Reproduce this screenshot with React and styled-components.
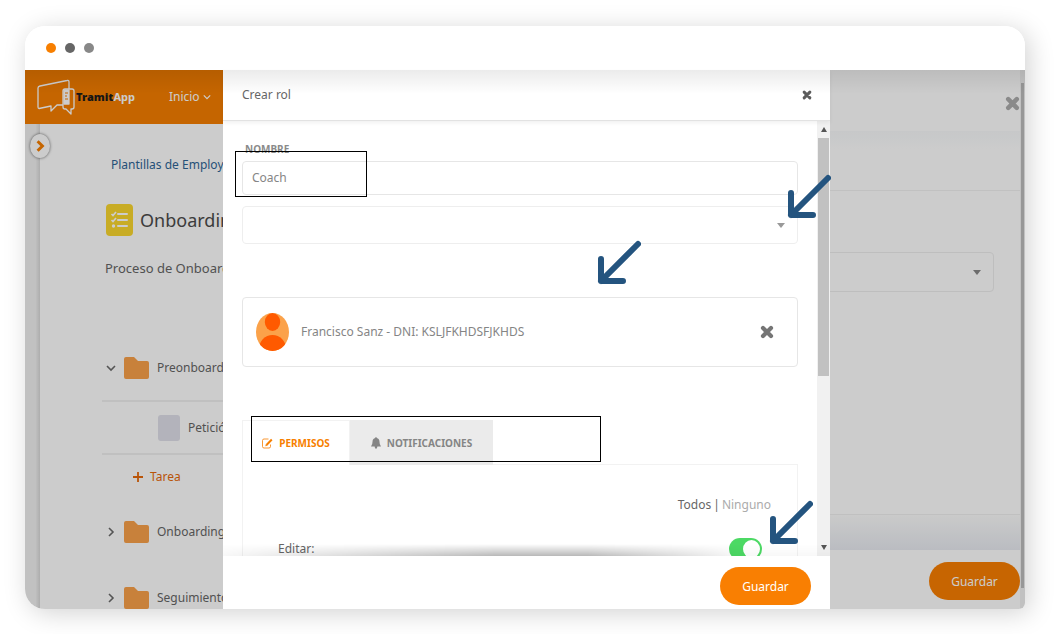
import React from 'react';
import styled, { createGlobalStyle, css } from 'styled-components';

const GlobalStyle = createGlobalStyle`
  *, *::before, *::after {
    box-sizing: border-box;
  }

  body {
    margin: 0;
    background: #fff;
    color: #666;
    font-family: "Noto Sans", "Open Sans", sans-serif;
    font-size: 12px;
    line-height: 16px;
  }

  button, input, select {
    font: inherit;
    color: inherit;
  }

  button {
    border: 0;
    padding: 0;
    background: none;
    cursor: pointer;
  }

  svg {
    display: block;
    flex: none;
  }
`;

const Backdrop = styled.div`
  height: 100vh;
  padding: 26px 36px 25px 25px;
  overflow: hidden;
`;

const Window = styled.div`
  display: flex;
  flex-direction: column;
  height: 100%;
  border-radius: 20px 20px 6px 20px;
  overflow: hidden;
  box-shadow: 4px 4px 26px rgba(0, 0, 0, .18);
`;

const TitleBar = styled.div`
  display: flex;
  align-items: center;
  gap: 9px;
  flex: none;
  height: 44px;
  padding: 0 21px;
  background: #fff;
`;

const Dot = styled.span`
  width: 10px;
  height: 10px;
  border-radius: 50%;
  background: ${({ color }) => color};
`;

const Screen = styled.div`
  position: relative;
  flex: 1;
  min-height: 0;
  background: #fff;

  &::after {
    content: '';
    position: absolute;
    top: 0;
    left: 0;
    right: 0;
    height: 24px;
    background: linear-gradient(rgba(0, 0, 0, .08), rgba(0, 0, 0, 0));
    pointer-events: none;
  }
`;

const Page = styled.div`
  display: flex;
  height: 100%;
`;

const AppPane = styled.div`
  display: flex;
  flex: 1;
  flex-direction: column;
  min-width: 0;
`;

const NavBar = styled.header`
  display: flex;
  align-items: center;
  gap: 34px;
  flex: none;
  height: 54px;
  padding: 0 12px;
  background: #f77f00;
  color: #fff;
`;

const Brand = styled.a`
  display: flex;
  align-items: center;
  color: #fff;
  font-size: 11px;
  font-weight: 700;
  text-decoration: none;

  b {
    color: #1c1c1c;
  }
`;

const NavLink = styled.a`
  display: flex;
  align-items: center;
  gap: 3px;
  color: #fff;
  text-decoration: none;
`;

const PaneBody = styled.div`
  display: flex;
  flex: 1;
  min-height: 0;
`;

const SideStrip = styled.div`
  position: relative;
  flex: none;
  width: 15px;
  background: linear-gradient(90deg, #f2f2f2 70%, #d8d8d8);
`;

const ExpandButton = styled.button`
  position: absolute;
  top: 10px;
  left: 5px;
  display: flex;
  align-items: center;
  justify-content: center;
  width: 20px;
  height: 24px;
  border-radius: 50%;
  background: #fff;
  box-shadow: 0 0 3px rgba(0, 0, 0, .6);
`;

const Main = styled.main`
  flex: 1;
  min-width: 0;
  padding: 33px 0 0 62px;
  white-space: nowrap;
  overflow: hidden;
`;

const Crumb = styled.a`
  display: block;
  margin-left: 9px;
  color: #2f6596;
  text-decoration: none;
`;

const TitleRow = styled.div`
  display: flex;
  align-items: center;
  gap: 7px;
  height: 32px;
  margin: 31px 0 0 4px;
`;

const PageTitle = styled.h1`
  margin: 0;
  color: #4c4c4c;
  font-size: 18px;
  font-weight: 400;
  line-height: 32px;
`;

const Summary = styled.p`
  margin: 22px 0 58px 3px;
  font-size: 13px;
  line-height: 20px;
`;

const TreeRow = styled.div`
  display: flex;
  align-items: center;
  gap: 8px;
  height: ${({ height }) => height}px;
  padding-left: ${({ indent }) => indent || 4}px;
  border-bottom: ${({ ruled }) => (ruled ? '2px solid #f0f0f0' : '0')};
`;

const TaskTile = styled.span`
  width: 22px;
  height: 26px;
  border-radius: 3px;
  background: #e0e0ea;
`;

const AddTask = styled.button`
  display: flex;
  align-items: center;
  gap: 7px;
  height: 44px;
  margin-left: 31px;
  color: #e8690b;
`;

const Drawer = styled.aside`
  display: flex;
  flex: 1;
  min-width: 0;
`;

const DrawerColumn = styled.div`
  display: flex;
  flex: 1;
  flex-direction: column;
`;

const DrawerHeader = styled.div`
  display: flex;
  align-items: center;
  justify-content: flex-end;
  flex: none;
  height: 61px;
  padding-top: 5px;
  color: #adadad;
`;

const DrawerBody = styled.div`
  display: flex;
  flex: 1;
  flex-direction: column;
  background: linear-gradient(#f9fbfc, #fff 18px);
`;

const DrawerSection = styled.div`
  height: 60px;
  border-bottom: 1px solid #f2f2f2;
`;

const DrawerFields = styled.div`
  flex: 1;
  padding: 61px 26px 0 0;
`;

const DrawerFade = styled.div`
  height: 36px;
  border-top: 1px solid #f0f0f0;
  background: linear-gradient(#fdfdfd, #e9ecf2);
`;

const DrawerFooter = styled.div`
  display: flex;
  justify-content: flex-end;
  flex: none;
  height: 59px;
  padding-top: 12px;
`;

const PageScroll = styled.div`
  width: 5px;
  padding: 13px 1px 21px;
  background: #f2f2f2;

  &::before {
    content: '';
    display: block;
    height: 100%;
    background: #bdbdbd;
  }
`;

const PrimaryButton = styled.button`
  flex: none;
  width: 91px;
  height: 38px;
  padding-top: 1px;
  border-radius: 19px;
  background: #f97f02;
  color: #fff;
`;

const SelectBox = styled.div`
  display: grid;
  grid-template-columns: 1fr 21px;
  align-items: center;
  height: ${({ height }) => height}px;

  select {
    grid-area: 1 / 1 / 2 / 3;
  }

  svg {
    grid-area: 1 / 2;
    pointer-events: none;
  }
`;

const fieldFrame = css`
  width: 100%;
  border: 1px solid #e6e6e6;
  border-radius: 4px;
  background: transparent;
  outline: 0;
`;

const Select = styled.select`
  ${fieldFrame}
  height: 100%;
  border-color: #eee;
  appearance: none;
`;

const Overlay = styled.div`
  position: absolute;
  inset: 0;
  display: grid;
  grid-template-columns: 198px minmax(0, 1fr) 195px;
  background: rgba(0, 0, 0, .2);
`;

const Dialog = styled.section`
  position: relative;
  grid-column: 2;
  display: flex;
  flex-direction: column;
  min-height: 0;
  background: #fff;
`;

const DialogHeader = styled.header`
  position: relative;
  display: flex;
  align-items: center;
  justify-content: space-between;
  flex: none;
  height: 51px;
  padding: 0 18px 0 19px;
  border-bottom: 1px solid #e2e2e2;
  box-shadow: 0 2px 4px rgba(0, 0, 0, .06);
`;

const DialogTitle = styled.h2`
  margin: 0;
  font-size: 12px;
  font-weight: 400;
`;

const CloseButton = styled.button`
  color: ${({ color }) => color};
`;

const DialogBody = styled.div`
  display: flex;
  flex: 1;
  min-height: 0;
`;

const Form = styled.form`
  flex: 1;
  min-width: 0;
  padding: 20px 19px 0;
  overflow: hidden;
`;

const FieldLabel = styled.label`
  display: block;
  margin-left: 3px;
  color: #8a8a8a;
  font-size: 10px;
  font-weight: 700;
  line-height: 16px;
`;

const TextInput = styled.input`
  ${fieldFrame}
  display: block;
  height: 34px;
  margin: 4px 0 11px;
  padding: 0 9px 2px;
  color: #858585;
`;

const PersonCard = styled.div`
  display: flex;
  align-items: center;
  gap: 12px;
  height: 70px;
  margin: 53px 0;
  padding: 0 23px 0 13px;
  border: 1px solid #e6e6e6;
  border-radius: 4px;
  color: #858585;

  span {
    flex: 1;
  }
`;

const Tabs = styled.div`
  display: flex;
  height: 45px;
`;

const Tab = styled.button`
  display: flex;
  align-items: center;
  justify-content: center;
  gap: 6px;
  width: ${({ width }) => width}px;
  border: 1px solid ${({ $active }) => ($active ? '#f2f2f2' : '#ebebeb')};
  border-bottom: 0;
  background: ${({ $active }) => ($active ? '#fff' : '#ebebeb')};
  color: ${({ $active }) => ($active ? '#f77f00' : '#858585')};
  font-size: 10px;
  font-weight: 700;
`;

const TabRest = styled.div`
  flex: 1;
  border-bottom: 1px solid #f2f2f2;
`;

const Permissions = styled.div`
  padding: 32px 26px 0 35px;
  border: 1px solid #f2f2f2;
  border-top: 0;
`;

const BulkLinks = styled.div`
  display: flex;
  justify-content: flex-end;
  gap: 2px;
  margin-bottom: 25px;

  button:last-child {
    color: #ababab;
  }
`;

const PermissionRow = styled.label`
  display: flex;
  align-items: center;
  justify-content: space-between;
  height: 22px;
  padding-right: 9px;
`;

const Switch = styled.input`
  appearance: none;
  width: 33px;
  height: 22px;
  margin: 0;
  padding: 2px;
  border-radius: 11px;
  background: #4cd964;

  &::before {
    content: '';
    display: block;
    width: 17px;
    height: 18px;
    margin-left: auto;
    border-radius: 50%;
    background: #fff;
  }
`;

const ScrollTrack = styled.div`
  display: flex;
  flex: none;
  flex-direction: column;
  align-items: center;
  width: 13px;
  padding: 6px 1px;
  background: #f1f1f1;
`;

const ScrollThumb = styled.div`
  width: 11px;
  height: 238px;
  margin: 6px 0 auto;
  background: #c1c1c1;
`;

const DialogFooter = styled.footer`
  position: relative;
  display: flex;
  justify-content: flex-end;
  flex: none;
  height: 53px;
  padding: 11px 19px 0;
  background: #fff;

  &::before {
    content: '';
    position: absolute;
    right: 0;
    bottom: 100%;
    left: 0;
    height: 12px;
    background: linear-gradient(rgba(0, 0, 0, 0), rgba(0, 0, 0, .28));
    mask-image: linear-gradient(90deg, rgba(0, 0, 0, .1), #000 45%, #000 60%, rgba(0, 0, 0, .1) 85%);
    pointer-events: none;
  }
`;

const Callout = styled.div`
  position: absolute;
  top: ${({ top }) => top}px;
  left: ${({ left }) => left}px;
  width: ${({ width }) => width}px;
  height: 46px;
  border: 1px solid #000;
  pointer-events: none;
`;

const Pointer = styled.svg`
  position: absolute;
  z-index: 1;
  top: ${({ $top }) => $top}px;
  right: ${({ $right }) => $right}px;
  pointer-events: none;
`;

const Arrow = ({ top, right }) => (
  <Pointer $top={top} $right={right} width="44" height="45" viewBox="0 0 44 45" fill="none">
    <path d="M41 4L4 41M4 19V41H26" stroke="#24547f" strokeWidth="6" strokeLinecap="round" strokeLinejoin="round" />
  </Pointer>
);

const Chevron = ({ size = 10, stroke = '#6b6b6b', weight = 1.6, right }) => (
  <svg width={size} height={size} viewBox="0 0 10 10" fill="none">
    <path d={right ? 'M3 1L7 5L3 9' : 'M1 3L5 7L9 3'} stroke={stroke} strokeWidth={weight} />
  </svg>
);

const Caret = ({ flip, fill = '#999', width = 8 }) => (
  <svg width={width} height="5" viewBox="0 0 8 5" preserveAspectRatio="none">
    <path d={flip ? 'M0 5L4 0L8 5Z' : 'M0 0H8L4 5Z'} fill={fill} />
  </svg>
);

const Cross = ({ size }) => (
  <svg width={size} height={size} viewBox="0 0 14 14">
    <path d="M3 3L11 11M11 3L3 11" stroke="currentColor" strokeWidth="4.2" strokeLinecap="round" />
  </svg>
);

const Folder = () => (
  <svg width="25" height="22" viewBox="0 0 25 22">
    <path d="M2 0H10L14 4H23Q25 4 25 6V20Q25 22 23 22H2Q0 22 0 20V2Q0 0 2 0Z" fill="#fba24a" />
  </svg>
);

const Logo = () => (
  <svg width="39" height="37" viewBox="0 0 39 37" fill="none" stroke="#fff" strokeWidth="1.3" strokeLinejoin="round">
    <path d="M26 26H20L14 32V27L2 29.500Q1 29.500 1 28V9Q1 7.500 3 7L30 1.500Q32 1 32 3V10" />
    <path d="M28 10H35Q37 10 37 12V28Q37 30 35 30H34V35L29 30H28Q26 30 26 28V12Q26 10 28 10Z" />
    <path d="M27 11H32V25H27Z" fill="#fff" />
    <path d="M28 14H31M28 17H30M28 20H31" stroke="#f77f00" strokeWidth="1" />
  </svg>
);

const Checklist = () => (
  <svg width="27" height="32" viewBox="0 0 27 32" fill="none">
    <rect width="27" height="32" rx="4" fill="#fbd72f" />
    <path d="M12 10H21M12 16H21M12 22H21" stroke="#fff" strokeWidth="2" strokeLinecap="round" />
    <path d="M5.500 10L7 11.500L10 8M5.500 16L7 17.500L10 14" stroke="#fff" strokeWidth="1.700" />
    <circle cx="7.500" cy="22" r="1.700" fill="#fff" />
  </svg>
);

const Avatar = () => (
  <svg width="33" height="38" viewBox="0 0 33 38">
    <clipPath id="face"><ellipse cx="16.500" cy="19" rx="16.500" ry="19" /></clipPath>
    <g clipPath="url(#face)">
      <rect width="33" height="38" fill="#fba24a" />
      <ellipse cx="16.500" cy="9" rx="7.700" ry="9" fill="#ff5a00" />
      <ellipse cx="16.500" cy="36" rx="13.500" ry="14" fill="#ff5a00" />
    </g>
  </svg>
);

const EditIcon = () => (
  <svg width="11" height="11" viewBox="0 0 11 11" fill="none" stroke="currentColor">
    <path d="M6.500 1H2Q.5 1 .5 2.500V8.500Q.5 10 2 10H7Q8.500 10 8.500 8.500V6.500" strokeWidth=".8" />
    <path d="M4.500 7L9.800 1.500" strokeWidth="2" />
    <path d="M3.300 8.200L5.300 7.700L3.800 6.200Z" fill="currentColor" stroke="none" />
  </svg>
);

const BellIcon = () => (
  <svg width="10" height="12" viewBox="0 0 11 12" preserveAspectRatio="none" fill="currentColor">
    <path d="M5.500 0Q6.300 0 6.300 1Q9.300 1.600 9.300 4.500Q9.300 7.800 11 9.500H0Q1.700 7.800 1.700 4.500Q1.700 1.600 4.700 1Q4.700 0 5.500 0ZM4 9.500H7Q6.800 11.800 5.500 11.800T4 9.500Z" />
  </svg>
);

const App = () => (
  <>
    <GlobalStyle />
    <Backdrop>
      <Window>
        <TitleBar>
          <Dot color="#f77f00" />
          <Dot color="#666" />
          <Dot color="#888" />
        </TitleBar>
        <Screen>
          <Page>
            <AppPane>
              <NavBar>
                <Brand href="#">
                  <Logo />
                  <b>Tramit</b>App
                </Brand>
                <NavLink href="#">
                  Inicio
                  <Chevron size={8} stroke="#fff" weight={1.5} />
                </NavLink>
              </NavBar>
              <PaneBody>
                <SideStrip>
                  <ExpandButton type="button" aria-label="Expandir">
                    <Chevron size={12} stroke="#f77f00" weight={2.5} right />
                  </ExpandButton>
                </SideStrip>
                <Main>
                  <Crumb href="#">Plantillas de Employee</Crumb>
                  <TitleRow>
                    <Checklist />
                    <PageTitle>Onboarding</PageTitle>
                  </TitleRow>
                  <Summary>Proceso de Onboarding</Summary>
                  <TreeRow height={66} ruled>
                    <Chevron />
                    <Folder />
                    Preonboarding
                  </TreeRow>
                  <TreeRow height={53} indent={56} ruled>
                    <TaskTile />
                    Petición
                  </TreeRow>
                  <AddTask type="button">
                    <svg width="10" height="10" viewBox="0 0 10 10">
                      <path d="M5 0V10M0 5H10" stroke="currentColor" strokeWidth="1.8" />
                    </svg>
                    Tarea
                  </AddTask>
                  <TreeRow height={66}>
                    <Chevron right />
                    <Folder />
                    Onboarding
                  </TreeRow>
                  <TreeRow height={66}>
                    <Chevron right />
                    <Folder />
                    Seguimiento
                  </TreeRow>
                </Main>
              </PaneBody>
            </AppPane>
            <Drawer>
              <DrawerColumn>
                <DrawerHeader>
                  <button type="button" aria-label="Cerrar panel"><Cross size={15} /></button>
                </DrawerHeader>
                <DrawerBody>
                  <DrawerSection />
                  <DrawerFields>
                    <SelectBox height={40}>
                      <Select aria-label="Plantilla" />
                      <Caret fill="#888" />
                    </SelectBox>
                  </DrawerFields>
                  <DrawerFade />
                </DrawerBody>
                <DrawerFooter>
                  <PrimaryButton type="button">Guardar</PrimaryButton>
                </DrawerFooter>
              </DrawerColumn>
              <PageScroll />
            </Drawer>
          </Page>
          <Overlay>
            <Dialog role="dialog" aria-labelledby="dialog-title">
              <DialogHeader>
                <DialogTitle id="dialog-title">Crear rol</DialogTitle>
                <CloseButton type="button" color="#5c5c5c" aria-label="Cerrar"><Cross size={10} /></CloseButton>
              </DialogHeader>
              <DialogBody>
                <Form id="role-form">
                  <FieldLabel htmlFor="name">NOMBRE</FieldLabel>
                  <TextInput id="name" defaultValue="Coach" />
                  <SelectBox height={38}>
                    <Select aria-label="Empleado" />
                    <Caret />
                  </SelectBox>
                  <PersonCard>
                    <Avatar />
                    <span>Francisco Sanz - DNI: KSLJFKHDSFJKHDS</span>
                    <CloseButton type="button" color="#757575" aria-label="Quitar"><Cross size={14} /></CloseButton>
                  </PersonCard>
                  <Tabs role="tablist">
                    <Tab type="button" role="tab" width={108} $active aria-selected="true">
                      <EditIcon />
                      PERMISOS
                    </Tab>
                    <Tab type="button" role="tab" width={143} aria-selected="false">
                      <BellIcon />
                      NOTIFICACIONES
                    </Tab>
                    <TabRest />
                  </Tabs>
                  <Permissions>
                    <BulkLinks>
                      <button type="button">Todos</button>
                      |
                      <button type="button">Ninguno</button>
                    </BulkLinks>
                    <PermissionRow>
                      Editar:
                      <Switch type="checkbox" defaultChecked />
                    </PermissionRow>
                  </Permissions>
                </Form>
                <ScrollTrack>
                  <Caret flip fill="#555" width={6} />
                  <ScrollThumb />
                  <Caret fill="#555" width={6} />
                </ScrollTrack>
              </DialogBody>
              <DialogFooter>
                <PrimaryButton type="submit" form="role-form">Guardar</PrimaryButton>
              </DialogFooter>
              <Callout top={81} left={12} width={132} />
              <Callout top={346} left={28} width={350} />
              <Arrow top={104} right={-1} />
              <Arrow top={170} right={189} />
              <Arrow top={430} right={17} />
            </Dialog>
          </Overlay>
        </Screen>
      </Window>
    </Backdrop>
  </>
);

export default App;
